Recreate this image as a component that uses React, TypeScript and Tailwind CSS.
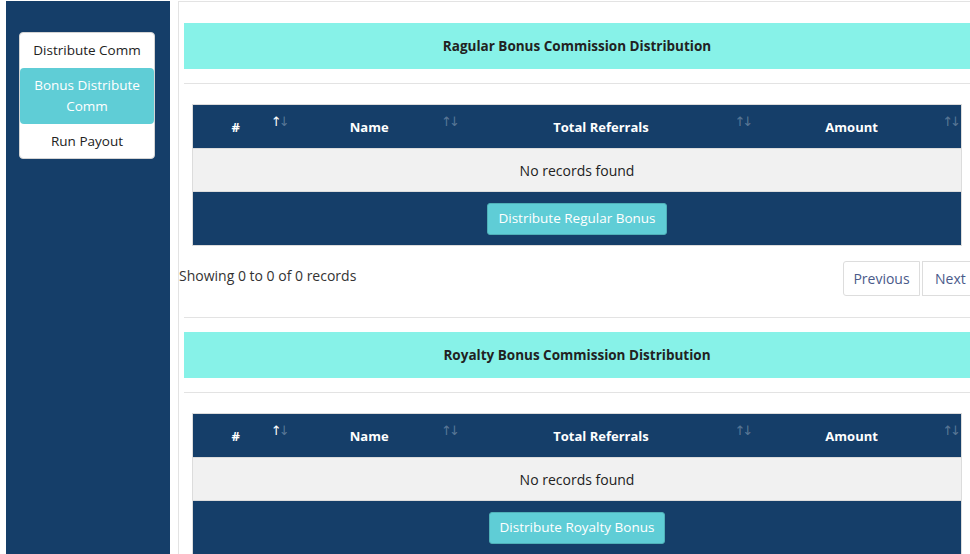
import React from "react";

const font = { fontFamily: '"Open Sans", "Noto Sans", sans-serif' };

function SortIcon({ active }: { active?: boolean }) {
  return (
    <span
      className="absolute right-[3px] top-[10px] text-[13px] leading-none tracking-[-3px] font-normal"
      style={{ fontFamily: '"DejaVu Sans", sans-serif' }}
    >
      <span className={active ? "text-white" : "text-white/30"}>↑</span>
      <span className="text-white/30">↓</span>
    </span>
  );
}

function BonusSection({ title, button, pager }: { title: string; button: string; pager?: boolean }) {
  const cols = [
    { label: "#", w: "w-[97px]", active: true },
    { label: "Name", w: "w-[170px]" },
    { label: "Total Referrals", w: "w-[293px]" },
    { label: "Amount", w: "w-[208px]" },
  ];
  return (
    <div>
      <div className="h-[46px] bg-[#87f2e8] flex items-center justify-center text-[13.5px] font-bold text-[#222]">
        {title}
      </div>
      <div className="mt-[14px] border-t border-[#e3e3e3]" />
      <div className="px-[8px] pt-[20px]">
        <table className="w-full border border-[#dcdcdc] border-collapse table-fixed">
          <thead>
            <tr className="bg-[#153e69] h-[44px]">
              {cols.map((c) => (
                <th key={c.label} className={`${c.w} relative pl-[8px] pr-[19px] pt-[2px] text-center text-[13px] font-bold text-white`}>
                  {c.label}
                  <SortIcon active={c.active} />
                </th>
              ))}
            </tr>
          </thead>
          <tbody>
            <tr className="bg-[#f1f1f1] h-[43px] border-t border-b border-[#dcdcdc]">
              <td colSpan={4} className="text-center text-[14px] text-[#222]">No records found</td>
            </tr>
            <tr className="bg-[#153e69] h-[54px]">
              <td colSpan={4} className="text-center">
                <button className="h-[32px] px-[10px] bg-[#5fcdd6] border border-[#4fb0b8] rounded-[3px] text-white text-[13.5px]">
                  {button}
                </button>
              </td>
            </tr>
          </tbody>
        </table>
      </div>
      {pager && (
        <div className="flex items-start justify-between -ml-[5px] mt-[15px]">
          <div className="text-[14px] text-[#333] leading-[20px] mt-[5px]">Showing 0 to 0 of 0 records</div>
          <div className="flex gap-[2px] -mr-[22px]">
            <button className="h-[35px] w-[77px] border border-[#ddd] rounded-l-[3px] text-[14px] text-[#4a5a8a]">Previous</button>
            <button className="h-[35px] w-[70px] border border-[#ddd] text-[14px] text-[#4a5a8a] text-left pl-[12px]">Next</button>
          </div>
        </div>
      )}
      {pager && <div className="mt-[21px] border-t border-[#e3e3e3]" />}
    </div>
  );
}

export default function App() {
  return (
    <div className="w-[970px] h-[554px] overflow-hidden bg-white flex pt-[1px]" style={font}>
      <div className="w-[6px] shrink-0" />
      <aside className="w-[164px] shrink-0 bg-[#153e69] pt-[31px] pl-[13px]">
        <div className="w-[136px] bg-white border border-[#d4d4d4] rounded-[4px] text-[13.5px] text-[#222] text-center">
          <div className="h-[35px] flex items-center justify-center">Distribute Comm</div>
          <div className="h-[56px] bg-[#5fcdd6] rounded-[4px] text-white leading-[21px] flex items-center justify-center px-2">
            Bonus Distribute Comm
          </div>
          <div className="h-[34px] flex items-center justify-center">Run Payout</div>
        </div>
      </aside>
      <div className="w-[8px] shrink-0" />
      <main className="flex-1 min-w-0 border-l border-t border-[#e3e3e3] pl-[5px] pt-[21px]">
        <div className="w-[786px]">
          <BonusSection title="Ragular Bonus Commission Distribution" button="Distribute Regular Bonus" pager />
          <div className="pt-[14px]">
            <BonusSection title="Royalty Bonus Commission Distribution" button="Distribute Royalty Bonus" />
          </div>
        </div>
      </main>
    </div>
  );
}
